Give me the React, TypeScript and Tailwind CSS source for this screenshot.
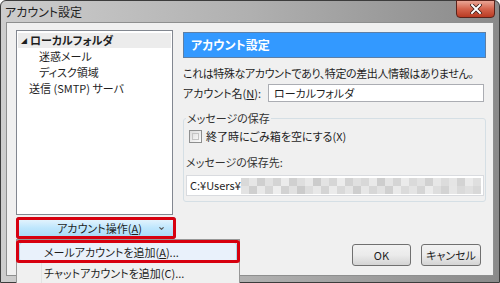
import { ChevronDown } from "lucide-react";

const mosaicTop = [
  "bg-[#d9d9d9]", "bg-[#e6e6e6]", "bg-[#cfcfcf]", "bg-[#e1e1e1]", "bg-[#d4d4d4]", "bg-[#ebebeb]",
  "bg-[#d0d0d0]", "bg-[#dedede]", "bg-[#e8e8e8]", "bg-[#cccccc]", "bg-[#e3e3e3]", "bg-[#d6d6d6]",
  "bg-[#ececec]", "bg-[#d2d2d2]", "bg-[#e0e0e0]", "bg-[#d8d8d8]", "bg-[#e9e9e9]", "bg-[#cdcdcd]",
  "bg-[#e4e4e4]", "bg-[#d5d5d5]", "bg-[#ebebeb]", "bg-[#dadada]", "bg-[#e2e2e2]", "bg-[#d1d1d1]",
  "bg-[#e7e7e7]", "bg-[#dcdcdc]", "bg-[#e5e5e5]", "bg-[#d3d3d3]", "bg-[#eaeaea]", "bg-[#dfdfdf]",
];
const mosaicBottom = [
  "bg-[#e3e3e3]", "bg-[#cfcfcf]", "bg-[#e9e9e9]", "bg-[#d6d6d6]", "bg-[#eeeeee]", "bg-[#d2d2d2]",
  "bg-[#e1e1e1]", "bg-[#cbcbcb]", "bg-[#dddddd]", "bg-[#e8e8e8]", "bg-[#d4d4d4]", "bg-[#ebebeb]",
  "bg-[#d9d9d9]", "bg-[#e5e5e5]", "bg-[#cecece]", "bg-[#e7e7e7]", "bg-[#d7d7d7]", "bg-[#e2e2e2]",
  "bg-[#d0d0d0]", "bg-[#eaeaea]", "bg-[#dbdbdb]", "bg-[#e4e4e4]", "bg-[#d5d5d5]", "bg-[#ececec]",
  "bg-[#dedede]", "bg-[#d3d3d3]", "bg-[#e6e6e6]", "bg-[#dadada]", "bg-[#e0e0e0]", "bg-[#d8d8d8]",
];

const App = () => {
  return (
    <div className="relative w-[500px] h-[283px] overflow-hidden whitespace-nowrap bg-white text-[11px] text-[#1e1e1e] font-['Noto_Sans_CJK_JP','Noto_Sans',sans-serif] [font-feature-settings:'palt']">
      {/* window frame */}
      <div className="flex flex-col h-full rounded-t-[6px] border border-[#3c3c3c] bg-gradient-to-r from-[#cdcdcd] via-[#b0b0b0] to-[#8a8a8a]">
        {/* title bar */}
        <div className="flex h-[21px] items-start justify-between">
          <span className="pl-[4px] pt-[3px] text-[12px] leading-[15px]">アカウント設定</span>
          <div className="-mt-px mr-[4px] flex h-[18px] w-[39px] items-center justify-center rounded-b-[4px] border border-[#5a231b] bg-gradient-to-b from-[#e9a595] via-[#d4634c] to-[#b93a22]">
            <svg width="12" height="10" viewBox="0 0 12 10">
              <path d="M2 1 L10 9 M10 1 L2 9" stroke="#3b1a14" strokeWidth="3.6" strokeLinecap="square" />
              <path d="M2 1 L10 9 M10 1 L2 9" stroke="#ffffff" strokeWidth="2" strokeLinecap="square" />
            </svg>
          </div>
        </div>

        {/* client area */}
        <div className="flex flex-1 mx-[5px] mb-[6px] border border-[#8e8f8f] bg-[#f0f0f0] pt-[7px] pl-[9px] pr-[7px]">
          {/* left column */}
          <div className="flex w-[160px] flex-col">
            <div className="h-[185px] w-[157px] border border-[#828790] bg-white pt-[2px] px-[1px]">
              <div className="flex h-[15px] items-center bg-[#ececec] pl-[3px]">
                <span className="text-[6px] leading-none">◢</span>
                <span className="ml-[3px] font-bold leading-[15px]">ローカルフォルダ</span>
              </div>
              <div className="h-[16px] pl-[21px] leading-[17px]">迷惑メール</div>
              <div className="h-[16px] pl-[21px] leading-[16px]">ディスク領域</div>
              <div className="h-[16px] pl-[11px] leading-[16px]">送信 (SMTP) サーバ</div>
            </div>
            <div className="mt-[2px] flex h-[22px] w-[160px] items-center rounded-[3px] border border-[#3c7fb1] bg-gradient-to-b from-[#eaf6fd] via-[#bee6fd] to-[#a7d9f5]">
              <span className="flex-1 pl-[24px] text-center leading-[20px]">
                アカウント操作(<span className="underline">A</span>)
              </span>
              <ChevronDown className="mr-[10px] h-[7px] w-[7px] text-[#555]" strokeWidth={4} />
            </div>
          </div>

          {/* right column */}
          <div className="ml-[7px] flex flex-1 flex-col">
            <div className="mt-[2px] flex h-[26px] items-center border border-[#5d7fa6] bg-[#3399ff] pl-[7px] text-[12px] font-bold text-white">
              アカウント設定
            </div>
            <div className="mt-[8px] h-[14px] leading-[14px] tracking-[-0.4px]">
              これは特殊なアカウントであり、特定の差出人情報はありません。
            </div>
            <div className="mt-[4px] flex h-[18px] items-center">
              <span className="w-[85px]">
                アカウント名(<span className="underline">N</span>):
              </span>
              <div className="mr-[2px] flex h-[18px] flex-1 items-center border border-[#abadb3] bg-white pl-[5px]">
                ローカルフォルダ
              </div>
            </div>

            {/* message storage group */}
            <div className="relative mt-[16px] h-[84px] rounded-[3px] border border-[#d5dfe5]">
              <span className="absolute -top-[8px] left-[2px] bg-[#f0f0f0] px-px leading-[14px] text-[#333]">
                メッセージの保存
              </span>
              <div className="mt-[10px] flex h-[14px] items-center pl-[5px]">
                <div className="h-[13px] w-[13px] border border-[#8e8f8f] bg-gradient-to-br from-[#dcdcdc] to-[#fbfbfb] p-[2px]">
                  <div className="h-full w-full border border-[#c4c4c4] bg-gradient-to-br from-[#e3e3e3] to-[#f6f6f6]" />
                </div>
                <span className="ml-[4px] leading-[14px]">終了時にごみ箱を空にする(X)</span>
              </div>
              <div className="mt-[12px] h-[14px] pl-[2px] leading-[14px] text-[#333]">メッセージの保存先:</div>
              <div className="mt-[6px] ml-[2px] mr-px flex h-[21px] items-center overflow-hidden border border-[#d9dbdf] bg-white pl-[3px]">
                <span className="shrink-0">C:¥Users¥</span>
                <div className="flex flex-col">
                  <div className="flex">
                    {mosaicTop.map((c, i) => (
                      <div key={i} className={`h-[8px] w-[8px] ${c}`} />
                    ))}
                  </div>
                  <div className="flex">
                    {mosaicBottom.map((c, i) => (
                      <div key={i} className={`h-[8px] w-[8px] ${c}`} />
                    ))}
                  </div>
                </div>
              </div>
            </div>

            {/* dialog buttons */}
            <div className="mt-auto mb-[9px] flex justify-end gap-[10px] pr-[5px]">
              <div className="flex h-[22px] w-[59px] items-center justify-center rounded-[3px] border border-[#707070] bg-gradient-to-b from-[#f2f2f2] via-[#ebebeb] to-[#d4d4d4]">
                OK
              </div>
              <div className="flex h-[22px] w-[60px] items-center justify-center rounded-[3px] border border-[#707070] bg-gradient-to-b from-[#f2f2f2] via-[#ebebeb] to-[#d4d4d4]">
                キャンセル
              </div>
            </div>
          </div>
        </div>
      </div>

      {/* dropdown menu */}
      <div className="absolute left-[16px] top-[239px] h-[50px] w-[224px] border border-[#979797] bg-[#f0f0f0] pt-[2px] px-[2px]">
        <div className="absolute left-[24px] top-0 bottom-0 w-px bg-[#e2e3e3]" />
        <div className="relative flex h-[20px] items-center rounded-[3px] border border-[#a8d8eb] bg-[#e9f1fb] pl-[24px]">
          メールアカウントを追加(<span className="underline">A</span>)...
        </div>
        <div className="relative flex h-[22px] items-center pl-[25px]">
          チャットアカウントを追加(C)...
        </div>
      </div>

      {/* red annotation boxes */}
      <div className="absolute left-[16px] top-[217px] h-[22px] w-[160px] rounded-[3px] border-[3px] border-[#d7000f]" />
      <div className="absolute left-[16px] top-[240px] h-[23px] w-[224px] rounded-[3px] border-[3px] border-[#d7000f]" />
    </div>
  );
};

export default App;
